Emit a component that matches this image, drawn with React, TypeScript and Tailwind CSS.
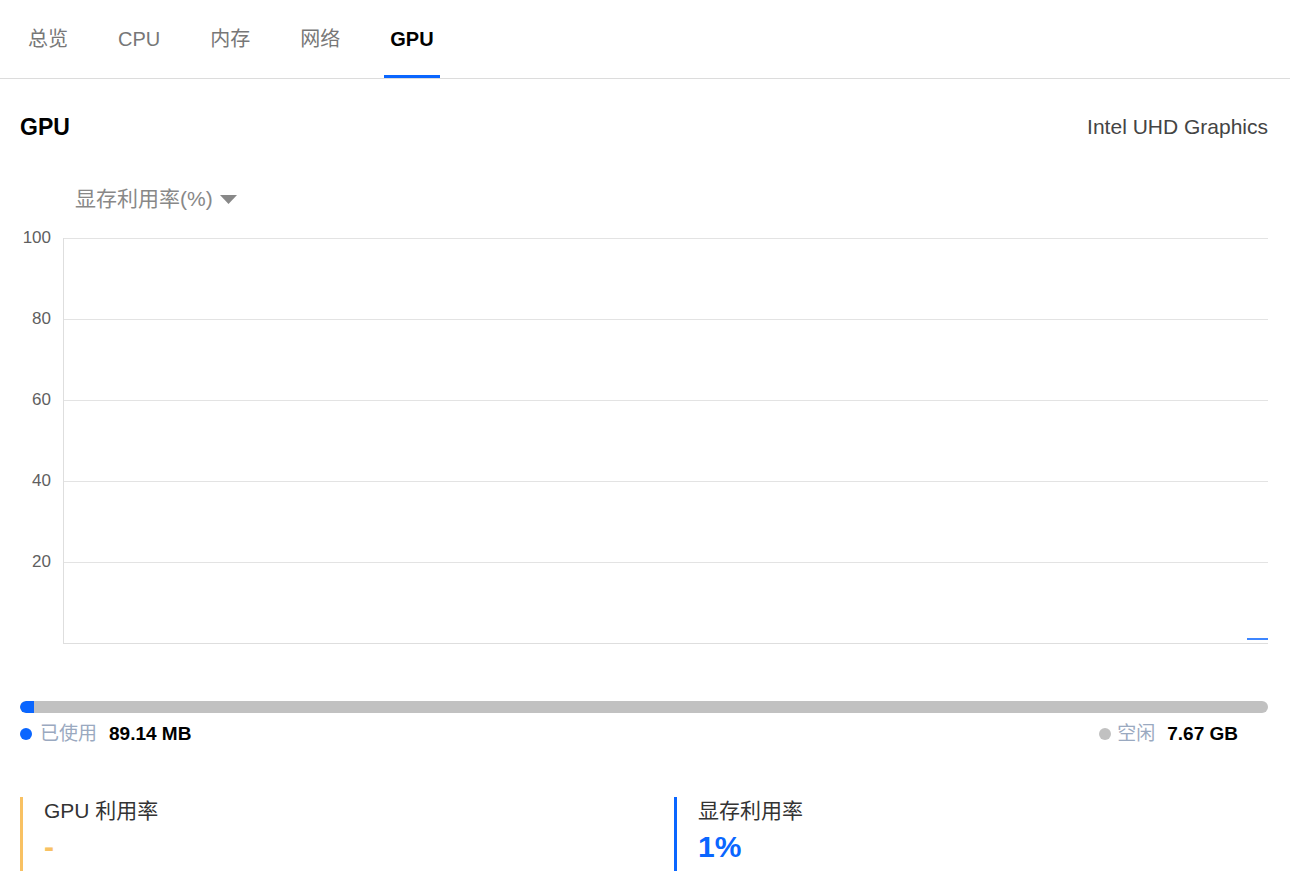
import React from "react";

const tabs = ["总览", "CPU", "内存", "网络", "GPU"];
const yLabels = ["100", "80", "60", "40", "20"];

export default function App() {
  return (
    <div className="min-h-screen w-full bg-white font-['Liberation_Sans','Noto_Sans_CJK_SC',sans-serif] text-[#333]">
      {/* Tabs */}
      <div className="flex h-[79px] items-stretch gap-[38px] border-b border-[#dcdcdc] pl-[22px]">
        {tabs.map((t) => {
          const active = t === "GPU";
          return (
            <div
              key={t}
              className={
                active
                  ? "relative flex items-center px-[6px] text-[20px] font-bold text-black"
                  : "relative flex items-center px-[6px] text-[20px] text-[#777]"
              }
            >
              {t}
              {active && (
                <div className="absolute bottom-0 left-0 right-0 h-[3px] bg-[#0a66ff]" />
              )}
            </div>
          );
        })}
      </div>

      <div className="pl-[20px] pr-[22px]">
        {/* Title row */}
        <div className="flex items-center justify-between pt-[34px]">
          <div className="text-[23px] font-bold leading-[28px] text-black">GPU</div>
          <div className="text-[21px] leading-[28px] text-[#444]">Intel UHD Graphics</div>
        </div>

        {/* Dropdown */}
        <div className="mt-[44px] flex items-center pl-[55px] text-[21px] leading-[28px] text-[#888]">
          <span>显存利用率(%)</span>
          <svg className="ml-[7px]" width="17" height="9" viewBox="0 0 17 9">
            <path d="M0 0 L17 0 L8.5 9 Z" fill="#888" />
          </svg>
        </div>

        {/* Chart */}
        <div className="mt-[25px] flex">
          <div className="mr-[12px] flex w-[31px] flex-col text-right text-[17px] text-[#5f5f5f]">
            {yLabels.map((l) => (
              <div key={l} className="h-[81px]">
                <div className="-mt-[9px] leading-[18px]">{l}</div>
              </div>
            ))}
          </div>
          <div className="relative flex flex-1 flex-col border-b border-l border-[#dedede]">
            {yLabels.map((l) => (
              <div key={l} className="h-[81px] border-t border-[#e3e3e3]" />
            ))}
            <div className="absolute bottom-[3px] right-0 h-[2px] w-[21px] bg-[#3d86ff]" />
          </div>
        </div>

        {/* Memory bar */}
        <div className="mt-[57px] h-[12px] w-full overflow-hidden rounded-full bg-[#c1c1c1]">
          <div className="h-full w-[14px] rounded-l-full bg-[#0a66ff]" />
        </div>

        {/* Legend */}
        <div className="mt-[9px] flex items-center justify-between pr-[30px] text-[19px] leading-[24px]">
          <div className="flex items-center">
            <span className="h-[12px] w-[12px] rounded-full bg-[#0a66ff]" />
            <span className="ml-[8px] text-[#9aa9c0]">已使用</span>
            <span className="ml-[12px] font-bold text-black">89.14 MB</span>
          </div>
          <div className="flex items-center">
            <span className="h-[12px] w-[12px] rounded-full bg-[#c1c1c1]" />
            <span className="ml-[6px] text-[#9aa9c0]">空闲</span>
            <span className="ml-[12px] font-bold text-black">7.67 GB</span>
          </div>
        </div>

        {/* Stats */}
        <div className="mt-[51px] grid grid-cols-2 gap-[60px]">
          <div className="border-l-[3px] border-[#f8c163] pb-[6px] pl-[21px]">
            <div className="text-[21px] leading-[28px] text-[#333]">GPU 利用率</div>
            <div className="mt-[4px] text-[30px] font-bold leading-[36px] text-[#f8c163]">-</div>
          </div>
          <div className="border-l-[3px] border-[#0a66ff] pb-[6px] pl-[21px]">
            <div className="text-[21px] leading-[28px] text-[#333]">显存利用率</div>
            <div className="mt-[4px] text-[30px] font-bold leading-[36px] text-[#0a66ff]">1%</div>
          </div>
        </div>
      </div>
    </div>
  );
}
